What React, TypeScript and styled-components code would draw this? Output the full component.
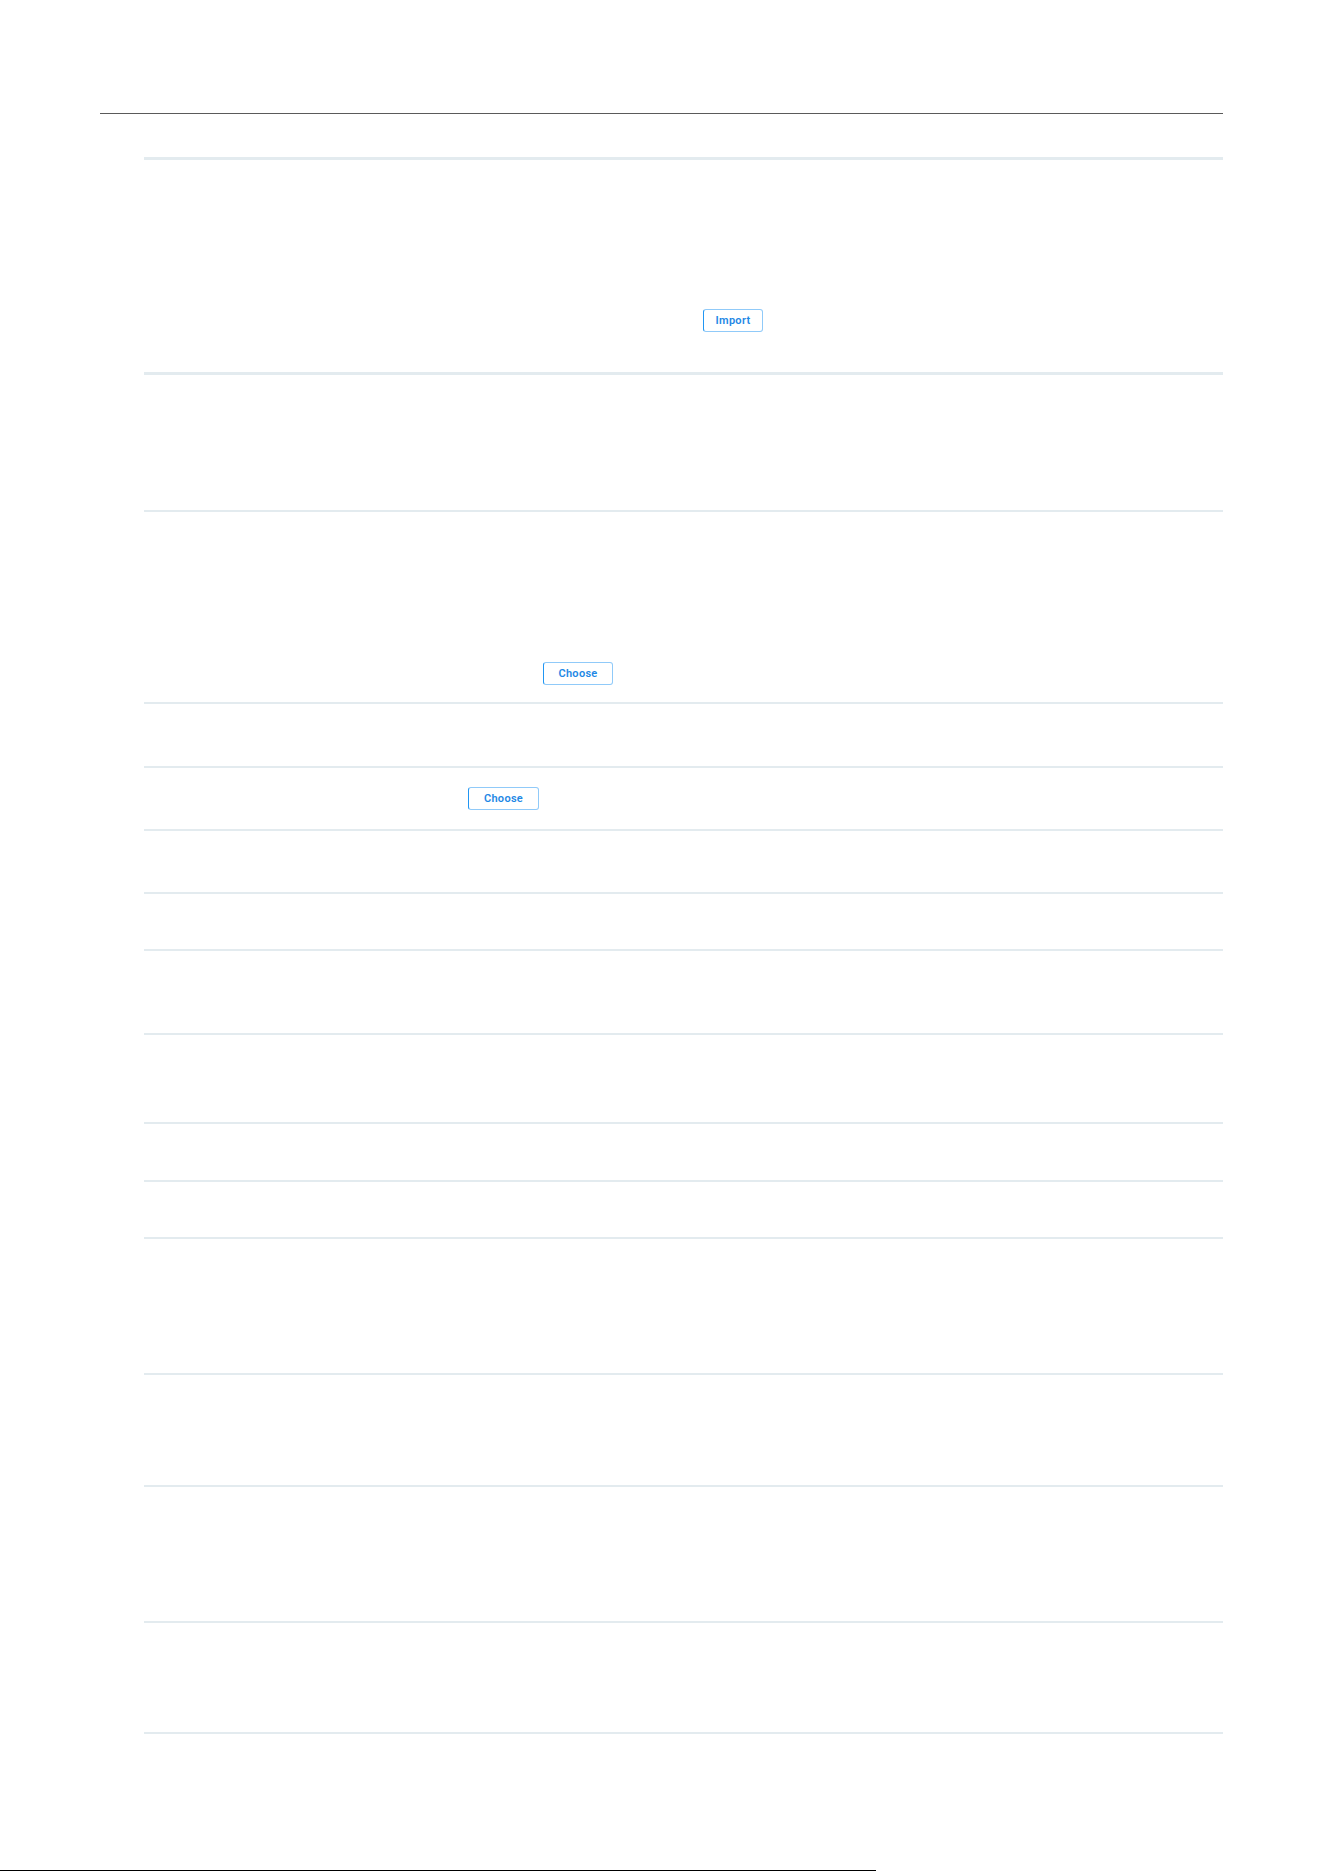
import styled, { createGlobalStyle } from "styled-components"

const GlobalStyle = createGlobalStyle`
    html, body {
        margin: 0;
        padding: 0;
        background: #ffffff;
        font-family: Roboto, "Liberation Sans", sans-serif;
    }
`

type Btn = { label: string; left: number; top: number; width: number }
type Row = { h: number; thick?: boolean; btn?: Btn }

// section heights include their top rule
const rows: Row[] = [
    { h: 215, thick: true, btn: { label: "Import", left: 559, top: 149, width: 60 } },
    { h: 138, thick: true },
    { h: 192, btn: { label: "Choose", left: 399, top: 150, width: 70 } },
    { h: 64 },
    { h: 63, btn: { label: "Choose", left: 324, top: 19, width: 71 } },
    { h: 63 },
    { h: 57 },
    { h: 84 },
    { h: 89 },
    { h: 58 },
    { h: 57 },
    { h: 136 },
    { h: 112 },
    { h: 136 },
    { h: 111 },
]

const App = () => {
    return (
        <>
            <GlobalStyle />
            <Page>
                <Container>
                    <TopBar />
                    <SettingsList>
                        {rows.map((row, i) => (
                            <Section key={i} $h={row.h} $thick={row.thick}>
                                {row.btn && (
                                    <ButtonSlot $left={row.btn.left} $top={row.btn.top}>
                                        <ActionButton type="button" $w={row.btn.width}>
                                            {row.btn.label}
                                        </ActionButton>
                                    </ButtonSlot>
                                )}
                            </Section>
                        ))}
                    </SettingsList>
                </Container>
                <Footer>
                    <FooterRule />
                </Footer>
            </Page>
        </>
    )
}

export default App

const Page = styled.div`
    width: 1324px;
    padding-top: 113px;
    box-sizing: border-box;
`
const Container = styled.div`
    width: 1123px;
    margin-left: 100px;
`
const TopBar = styled.div`
    height: 1px;
    background: #5a5a5a;
`
const SettingsList = styled.div`
    margin-left: 44px;
    margin-top: 43px;
    border-bottom: 2px solid #e3ebef;
`
const Section = styled.div<{ $h: number; $thick?: boolean }>`
    box-sizing: border-box;
    height: ${(p) => p.$h}px;
    border-top: ${(p) => (p.$thick ? 3 : 2)}px solid #e3ebef;
    display: flex;
    align-items: flex-start;
`
const ButtonSlot = styled.div<{ $left: number; $top: number }>`
    padding-left: ${(p) => p.$left}px;
    padding-top: ${(p) => p.$top}px;
`
const ActionButton = styled.button<{ $w: number }>`
    box-sizing: border-box;
    width: ${(p) => p.$w}px;
    height: 23px;
    padding: 0;
    background: #ffffff;
    border: 1px solid #90caf9;
    border-left-color: #2196f3;
    border-radius: 3px;
    color: #1e88e5;
    font-family: Roboto, "Liberation Sans", sans-serif;
    font-size: 11px;
    font-weight: 600;
    letter-spacing: 0.3px;
    text-align: center;
    cursor: pointer;
`
const Footer = styled.div`
    display: flex;
    align-items: flex-start;
    margin-top: 136px;
    height: 20px;
`
const FooterRule = styled.div`
    width: 876px;
    height: 1px;
    background: #000000;
`
